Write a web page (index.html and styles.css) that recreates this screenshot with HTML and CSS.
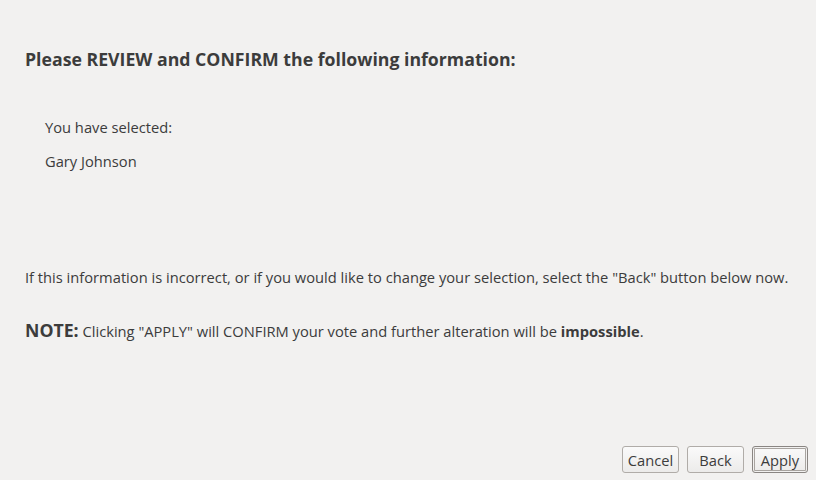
FILE: index.html
```html
<!DOCTYPE html>
<html>
<head>
<meta charset="utf-8">
<link rel="stylesheet" href="styles.css">
</head>
<body>
<div class="page">
  <h1 class="title">Please REVIEW and CONFIRM the following information:</h1>
  <div class="selection">
    <p class="line">You have selected:</p>
    <p class="line">Gary Johnson</p>
  </div>
  <p class="info">If this information is incorrect, or if you would like to change your selection, select the "Back" button below now.</p>
  <p class="note"><span class="note-label">NOTE:</span> Clicking "APPLY" will CONFIRM your vote and further alteration will be <b>impossible</b>.</p>
  <div class="actions">
    <button class="btn">Cancel</button>
    <button class="btn">Back</button>
    <button class="btn btn-default">Apply</button>
  </div>
</div>
</body>
</html>
```
FILE: styles.css
```css
html, body {
  margin: 0;
  padding: 0;
  background: #f2f1f0;
}
.page {
  box-sizing: border-box;
  width: 816px;
  height: 480px;
  padding: 0 8px 7px 25px;
  display: flex;
  flex-direction: column;
  font-family: "Open Sans", sans-serif;
  color: #3c3c3c;
}
.title {
  margin: 47px 0 0 0;
  font-size: 17.7px;
  font-weight: 700;
  line-height: 24px;
}
.selection {
  margin: 46px 0 0 20px;
  display: flex;
  flex-direction: column;
  gap: 14px;
}
.line {
  margin: 0;
  font-size: 14.7px;
  line-height: 20px;
}
.info {
  margin: 96px 0 0 0;
  font-size: 14.7px;
  line-height: 20px;
}
.note {
  margin: 31px 0 0 0;
  font-size: 14.7px;
  line-height: 24px;
}
.note-label {
  font-size: 17.7px;
  font-weight: 700;
}
.actions {
  margin-top: auto;
  display: flex;
  justify-content: flex-end;
  gap: 8px;
}
.btn {
  box-sizing: border-box;
  width: 57px;
  height: 27px;
  padding: 0;
  border: 1px solid #b0aca8;
  border-radius: 3px;
  background: linear-gradient(#fafafa, #ecebea);
  font-family: "Open Sans", sans-serif;
  font-size: 14.7px;
  color: #3c3c3c;
}
.btn-default {
  width: 56px;
  border-color: #8a8683;
  box-shadow: inset 0 0 0 1px #f2f1f0, inset 0 0 0 2px #a8a4a0;
}
```
